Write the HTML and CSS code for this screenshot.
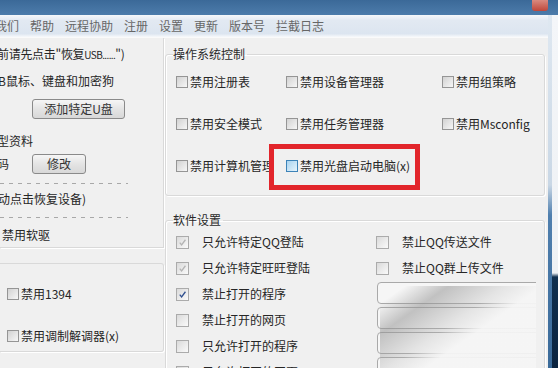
FILE: index.html
```html
<!DOCTYPE html>
<html lang="zh-CN">
<head>
    <meta charset="UTF-8">
    <meta name="viewport" content="width=device-width, initial-scale=1.0">
    <title>USB监控 - 设置</title>
    <link rel="stylesheet" href="styles.css">
</head>
<body>
    <div class="titlebar"><span class="close"></span></div>
    <div class="win">
        <div class="client">
            <div class="menubar">
                <span class="menu first">关于我们</span>
                <span class="menu">帮助</span>
                <span class="menu">远程协助</span>
                <span class="menu">注册</span>
                <span class="menu">设置</span>
                <span class="menu">更新</span>
                <span class="menu">版本号</span>
                <span class="menu">拦截日志</span>
            </div>
            <div class="main">
                <div class="left">
                    <div class="grp-top">
                        <p class="line l1">前请先点击"恢复<span class="latin">USB......</span>")</p>
                        <p class="line l2">B鼠标、键盘和加密狗</p>
                        <div class="btn-row"><button class="btn btn-add">添加特定U盘</button></div>
                        <p class="line l3">型资料</p>
                        <div class="pw-row"><span class="pw-label">码</span><button class="btn btn-edit">修改</button></div>
                        <div class="dash"></div>
                        <p class="line l4">动点击恢复设备)</p>
                        <div class="dash dash2"></div>
                        <label class="chk floppy"><span class="box"></span>禁用软驱</label>
                    </div>
                    <div class="grp-bottom">
                        <label class="chk"><span class="box"></span>禁用1394</label>
                        <label class="chk modem"><span class="box"></span>禁用调制解调器(x)</label>
                    </div>
                </div>

                <div class="right">
                    <fieldset class="group sys">
                        <legend>操作系统控制</legend>
                        <div class="grid3">
                            <label class="chk"><span class="box"></span>禁用注册表</label>
                            <label class="chk"><span class="box"></span>禁用设备管理器</label>
                            <label class="chk"><span class="box"></span>禁用组策略</label>
                            <label class="chk"><span class="box"></span>禁用安全模式</label>
                            <label class="chk"><span class="box"></span>禁用任务管理器</label>
                            <label class="chk"><span class="box"></span>禁用Msconfig</label>
                            <label class="chk"><span class="box"></span>禁用计算机管理</label>
                            <label class="chk marked"><span class="box hover"></span>禁用光盘启动电脑(x)<span class="mark"></span></label>
                        </div>
                    </fieldset>

                    <fieldset class="group soft">
                        <legend>软件设置</legend>
                        <div class="grid2">
                            <label class="chk wide"><span class="box grey"><svg viewBox="0 0 12 12"><path d="M3 6.2 L5 8.6 L9.2 3"/></svg></span>只允许特定QQ登陆</label>
                            <label class="chk wide"><span class="box"></span>禁止QQ传送文件</label>
                            <label class="chk wide"><span class="box grey"><svg viewBox="0 0 12 12"><path d="M3 6.2 L5 8.6 L9.2 3"/></svg></span>只允许特定旺旺登陆</label>
                            <label class="chk wide"><span class="box"></span>禁止QQ群上传文件</label>
                            <label class="chk wide c1"><span class="box blue"><svg viewBox="0 0 12 12"><path d="M3 6.2 L5 8.6 L9.2 3"/></svg></span>禁止打开的程序</label>
                            <div class="inputs">
                                <input class="field" type="text">
                                <input class="field" type="text">
                                <input class="field" type="text">
                                <input class="field" type="text">
                                <span class="smudge"></span>
                            </div>
                            <label class="chk wide c1"><span class="box"></span>禁止打开的网页</label>
                            <label class="chk wide c1"><span class="box"></span>只允许打开的程序</label>
                            <label class="chk wide c1"><span class="box"></span>只允许打开的网页</label>
                        </div>
                    </fieldset>
                </div>
            </div>
        </div>
        <div class="frame"></div>
        <div class="desk"></div>
    </div>
</body>
</html>
```

FILE: styles.css
```css
/* 窗口整体 */
body {
    margin: 0;
    width: 558px;
    height: 368px;
    overflow: hidden;
    font-family: "Noto Sans CJK SC", "Noto Sans", sans-serif;
    font-size: 12px;
    line-height: 20px;
    color: #262626;
    background-color: #f0f0f0;
}

p {
    margin: 0;
}

.titlebar {
    height: 15px;
    display: flex;
    justify-content: flex-end;
    background: linear-gradient(#3b6998, #4d7cab);
}

.close {
    width: 16px;
    height: 11px;
    margin-right: 10px;
    border-radius: 0 0 3px 3px;
    background: linear-gradient(#d98a7f, #c0473a);
}

.win {
    display: flex;
    height: 353px;
}

.client {
    width: 548px;
    display: flex;
    flex-direction: column;
}

.frame {
    width: 4px;
    background: linear-gradient(#dfe8f1 0, #c9d7e5 170px, #4f7fae 200px, #3a6a99 100%);
}

.desk {
    flex: 1;
    background: linear-gradient(#f4f6f9 0, #eef1f4 258px, #10304f 262px, #0b2440 100%);
}

/* 菜单栏 */
.menubar {
    height: 22px;
    display: flex;
    gap: 11px;
    line-height: 22px;
    color: #666;
    background: linear-gradient(#f6f8fb 0, #e2e9f2 25%, #dce5f0 85%, #f7f9fb 100%);
    border-bottom: 1px solid #fafafa;
}

.menu {
    white-space: nowrap;
}

.menu.first {
    margin-left: -29px;
}

.main {
    flex: 1;
    display: flex;
}

/* 左侧 */
.left {
    width: 164px;
}

.grp-top {
    padding: 6px 0 2px 0;
    border-right: 1px solid #d9d9d9;
    border-bottom: 1px solid #d9d9d9;
    box-shadow: 1px 1px 0 #fff;
}

.line {
    height: 20px;
    white-space: nowrap;
}

.l1 {
    margin-left: -3px;
    letter-spacing: -0.3px;
}

.latin {
    font-size: 10px;
    letter-spacing: -0.6px;
}

.l2 {
    margin-top: 7px;
    margin-left: -2px;
}

.btn-row {
    margin-top: 8px;
    height: 20px;
}

.btn {
    height: 20px;
    padding: 0;
    font-family: inherit;
    font-size: 12px;
    line-height: 18px;
    color: #333;
    border: 1px solid #8a8a8a;
    border-radius: 3px;
    background: linear-gradient(#f6f6f6, #e4e4e4 50%, #d8d8d8);
}

.btn-add {
    margin-left: 32px;
    width: 93px;
}

.l3 {
    margin-top: 12px;
    margin-left: -3px;
}

.pw-row {
    margin-top: 3px;
    display: flex;
    height: 20px;
}

.pw-label {
    width: 32px;
    margin-left: -3px;
    flex-shrink: 0;
}

.btn-edit {
    margin-left: 3px;
    width: 54px;
}

.dash {
    margin-top: 9px;
    height: 1px;
    width: 128px;
    background: repeating-linear-gradient(90deg, #a8a8a8 0 4px, transparent 4px 9px);
}

.dash2 {
    margin-top: 8px;
}

.l4 {
    margin-top: 5px;
    margin-left: -2px;
}

.grp-bottom {
    margin-top: 15px;
    padding: 20px 0 5px 0;
    border: 1px solid #d9d9d9;
    border-left: none;
    border-radius: 0 3px 3px 0;
    box-shadow: 1px 1px 0 #fff;
}

/* 复选框 */
.chk {
    display: flex;
    align-items: center;
    gap: 2px;
    height: 20px;
    white-space: nowrap;
}

.box {
    width: 12px;
    height: 12px;
    flex-shrink: 0;
    box-sizing: border-box;
    border: 1px solid #959595;
    background: linear-gradient(135deg, #d2d2d2, #f7f7f7);
    display: flex;
}

.box svg {
    width: 100%;
    height: 100%;
    fill: none;
    stroke-width: 1.4;
}

.box.grey svg {
    stroke: #b4b4b4;
}

.box.blue svg {
    stroke: #2f4f8f;
}

.box.hover {
    border-color: #3d83b8;
    background: linear-gradient(135deg, #a9d3ef, #e6f4fc);
}

.grp-top .floppy {
    margin-top: 7px;
    margin-left: -12px;
}

.grp-bottom .chk {
    margin-left: 7px;
}

.grp-bottom .modem {
    margin-top: 22px;
}

/* 右侧分组 */
.right {
    width: 380px;
    padding: 0 0 0 1px;
}

.group {
    margin: 0;
    padding: 0 8px 0 10px;
    border: 1px solid #d9d9d9;
    border-radius: 3px;
    box-shadow: inset 1px 1px 0 #fff, 1px 1px 0 #fff;
}

.group legend {
    margin-left: -3px;
    padding: 0 2px 0 0;
    height: 20px;
    color: #2a2a2a;
}

.sys {
    margin-top: 6px;
    padding-bottom: 19px;
}

.grid3 {
    margin-top: 8px;
    display: grid;
    grid-template-columns: 110px 156px 1fr;
    grid-auto-rows: 20px;
    row-gap: 22px;
}

.marked {
    position: relative;
}

.mark {
    position: absolute;
    left: -17px;
    top: -12px;
    width: 151px;
    height: 46px;
    box-sizing: border-box;
    border: 5px solid #e2252b;
}

.soft {
    margin-top: 14px;
    height: 160px;
}

.grid2 {
    margin-top: 2px;
    display: grid;
    grid-template-columns: 200px 1fr;
    grid-auto-rows: 20px;
    row-gap: 6px;
}

.chk.wide {
    gap: 13px;
}

.chk.wide .box {
    width: 13px;
    height: 13px;
    border-color: #ababab;
    background: linear-gradient(135deg, #dadada, #fafafa);
}

.c1 {
    grid-column: 1;
}

.inputs {
    grid-column: 2;
    grid-row: 3 / 7;
    margin-top: -2px;
    display: flex;
    flex-direction: column;
    gap: 3px;
    position: relative;
    overflow: hidden;
}

.field {
    height: 22px;
    width: 166px;
    margin: 0 0 0 1px;
    box-sizing: border-box;
    border: 1px solid #a9a9a9;
    border-radius: 4px;
    background-color: #f6f6f6;
}

.smudge {
    position: absolute;
    left: 4px;
    top: 4px;
    width: 170px;
    height: 100px;
    background: linear-gradient(145deg, rgba(150, 150, 150, 0) 8%, rgba(150, 150, 150, .55) 22%, rgba(175, 175, 175, .25) 40%, rgba(245, 245, 245, .95) 52%, rgba(245, 245, 245, .9) 100%);
}
```
